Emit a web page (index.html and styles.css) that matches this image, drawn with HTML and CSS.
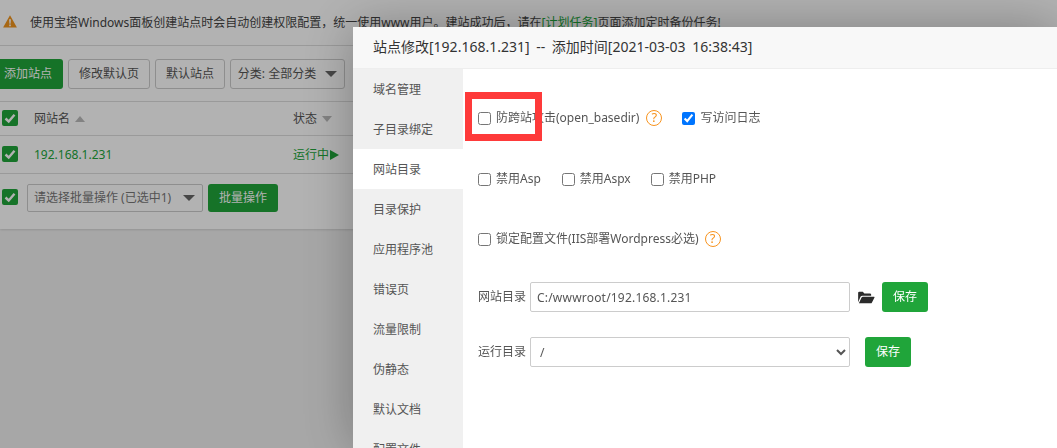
FILE: index.html
```html
<!DOCTYPE html>
<html lang="zh-CN">
<head>
<meta charset="utf-8">
<title>站点修改</title>
<link rel="stylesheet" href="styles.css">
</head>
<body>
<div class="page">
  <div class="alert">
    <svg class="warn" viewBox="0 0 14 13" width="14" height="13"><path d="M7 .3 13.9 12.6H.1Z" fill="#f0941e"/><path d="M6.1 4.2h1.8l-.3 4.6H6.4ZM6.2 9.6h1.6v1.6H6.2Z" fill="#fff"/></svg>
    <span>使用宝塔Windows面板创建站点时会自动创建权限配置，统一使用www用户。建站成功后，请在<a class="link">[计划任务]</a>页面添加定时备份任务!</span>
  </div>
  <div class="toolbar">
    <span class="btn btn-green btn-first">添加站点</span>
    <span class="btn btn-plain w82">修改默认页</span>
    <span class="btn btn-plain w70">默认站点</span>
    <span class="btn btn-plain w115">分类: 全部分类<i class="caret caret-big"></i></span>
  </div>
  <div class="thead">
    <span class="tick"><svg viewBox="0 0 16 16"><path d="M3.5 8.5 6.700 11.500 12.500 4.800" fill="none" stroke="#fff" stroke-width="2.400"/></svg></span>
    <span class="col-name">网站名<i class="sort-up"></i></span>
    <span class="col-status">状态<i class="sort-down"></i></span>
  </div>
  <div class="trow">
    <span class="tick"><svg viewBox="0 0 16 16"><path d="M3.5 8.500 6.700 11.500 12.500 4.800" fill="none" stroke="#fff" stroke-width="2.400"/></svg></span>
    <span class="col-name green-text">192.168.1.231</span>
    <span class="col-status green-text">运行中<i class="play"></i></span>
  </div>
  <div class="tfoot">
    <span class="tick"><svg viewBox="0 0 16 16"><path d="M3.500 8.500 6.700 11.500 12.500 4.800" fill="none" stroke="#fff" stroke-width="2.400"/></svg></span>
    <span class="batch">请选择批量操作 (已选中1)<i class="caret"></i></span>
    <span class="btn btn-green w70 h28">批量操作</span>
  </div>
</div>
<div class="shade"></div>
<div class="modal">
  <div class="modal-title">站点修改[192.168.1.231] -- 添加时间[2021-03-03 16:38:43]</div>
  <div class="modal-body">
    <ul class="side">
      <li>域名管理</li>
      <li>子目录绑定</li>
      <li class="active">网站目录</li>
      <li>目录保护</li>
      <li>应用程序池</li>
      <li>错误页</li>
      <li>流量限制</li>
      <li>伪静态</li>
      <li>默认文档</li>
      <li>配置文件</li>
    </ul>
    <div class="content">
      <div class="opt-row r1">
        <label class="opt"><input type="checkbox">防跨站攻击(open_basedir)</label>
        <span class="help">?</span>
        <label class="opt opt-log"><input type="checkbox" checked>写访问日志</label>
      </div>
      <div class="opt-row r2">
        <label class="opt"><input type="checkbox">禁用Asp</label>
        <label class="opt opt-aspx"><input type="checkbox">禁用Aspx</label>
        <label class="opt"><input type="checkbox">禁用PHP</label>
      </div>
      <div class="opt-row r3">
        <label class="opt"><input type="checkbox">锁定配置文件(IIS部署Wordpress必选)</label>
        <span class="help">?</span>
      </div>
      <div class="field r4">
        <span class="field-label">网站目录</span>
        <input class="text" type="text" value="C:/wwwroot/192.168.1.231">
        <svg class="folder" viewBox="0 0 18 14" width="17" height="13"><path d="M0 12V2q0-1.300 1.300-1.300H5L6.700 2.600h6q1.300 0 1.300 1.300V5H4.500Q3.300 5 2.700 6Z" fill="#2b2b2b"/><path d="M.8 13.300 3.700 7q.4-.9 1.400-.9h12q.9 0 .5 .9l-2.700 5.400q-.4 .9-1.400 .9Z" fill="#2b2b2b"/></svg>
        <span class="btn save">保存</span>
      </div>
      <div class="field r5">
        <span class="field-label">运行目录</span>
        <select class="pick"><option>/</option></select>
        <span class="btn save save-run">保存</span>
      </div>
    </div>
  </div>
</div>
<div class="mark"></div>
</body>
</html>
```
FILE: styles.css
```css
* { box-sizing: border-box; }
html, body { margin: 0; height: 100%; overflow: hidden; }
body {
  width: 1057px;
  height: 448px;
  background: #f0f0f0;
  color: #555;
  font: 12px/1.5 "Noto Sans", "Noto Sans CJK SC", sans-serif;
}
.page { height: 229px; background: #fff; box-shadow: 0 1px 2px rgba(0,0,0,.12); }
.alert {
  height: 46px;
  display: flex;
  align-items: center;
  gap: 13px;
  padding: 0 0 0 3px;
  background: #fff;
  color: #444;
  border-bottom: 1px solid #ddd;
}
.warn { flex: none; position: relative; top: -1px; }
.link { color: #20a53a; }
.toolbar {
  height: 56px;
  display: flex;
  align-items: center;
  gap: 5px;
  border-bottom: 1px solid #ddd;
}
.btn {
  display: inline-flex;
  align-items: center;
  justify-content: center;
  height: 30px;
  border-radius: 3px;
  white-space: nowrap;
}
.btn-green { background: #20a53a; color: #fff; }
.btn-plain { border: 1px solid #ccc; color: #555; background: #fff; }
.btn-first { width: 63px; justify-content: flex-end; padding-right: 11px; border-radius: 0 3px 3px 0; }
.w82 { width: 82px; }
.w70 { width: 70px; }
.w115 { width: 115px; }
.h28 { height: 28px; }
.caret {
  width: 0; height: 0;
  border-left: 6px solid transparent;
  border-right: 6px solid transparent;
  border-top: 6px solid #666;
  margin-left: 8px;
}
.caret-big { margin-left: 9px; }
.thead, .trow {
  display: flex;
  align-items: center;
  border-bottom: 1px solid #ddd;
  padding-left: 2px;
}
.thead { height: 34px; }
.trow { height: 38px; }
.tfoot { display: flex; align-items: center; height: 55px; padding: 0 0 7px 2px; }
.tick {
  flex: none;
  width: 16px; height: 16px;
  margin-top: -1px;
  border-radius: 2px;
  background: #20a53a;
}
.tfoot .tick { margin-top: -2px; }
.tick svg { display: block; width: 16px; height: 16px; }
.col-name { width: 259px; margin-left: 16px; display: flex; align-items: center; }
.col-status { display: flex; align-items: center; white-space: nowrap; }
.green-text { color: #20a53a; }
.sort-up, .sort-down {
  width: 0; height: 0;
  border-left: 5.500px solid transparent;
  border-right: 5.500px solid transparent;
  margin-left: 5px;
}
.sort-up { border-bottom: 6px solid #bbb; }
.sort-down { border-top: 6px solid #bbb; }
.play {
  width: 0; height: 0;
  border-top: 5px solid transparent;
  border-bottom: 5px solid transparent;
  border-left: 9px solid #20a53a;
  margin-left: 1px;
}
.batch {
  width: 176px; height: 28px;
  margin: 0 5px 0 9px;
  display: flex;
  align-items: center;
  justify-content: space-between;
  padding: 0 7px 0 6px;
  border: 1px solid #ccc;
  border-radius: 2px;
  color: #777;
  white-space: nowrap;
  background: #fff;
}
.batch .caret { margin-left: 0; flex: none; }
.shade { position: fixed; inset: 0; background: rgba(0,0,0,.3); }
.modal {
  position: fixed;
  left: 353px; top: 27px;
  width: 704px; height: 421px;
  background: #fff;
  box-shadow: 1px 1px 50px rgba(0,0,0,.3);
  overflow: hidden;
}
.modal-title {
  height: 42px;
  padding-left: 20px;
  font-size: 14px;
  line-height: 40px;
  word-spacing: 3px;
  color: #333;
  background: #f8f8f8;
  border-bottom: 1px solid #eee;
  white-space: nowrap;
}
.modal-body { display: flex; height: 379px; }
.side {
  flex: none;
  width: 110px;
  height: 379px;
  margin: 0;
  padding: 0;
  list-style: none;
  background: #f0f0f0;
  overflow: hidden;
}
.side li { height: 40px; line-height: 42px; padding-left: 20px; color: #555; }
.side .active { background: #fff; }
.content { flex: 1; padding-left: 15px; }
.opt-row { display: flex; align-items: center; height: 18px; }
.r1 { margin-top: 40px; }
.r2 { margin-top: 43px; }
.r3 { margin-top: 42px; }
.opt { display: flex; align-items: center; color: #555; white-space: nowrap; margin-right: 21px; }
.opt input { margin: 0 5px 0 0; flex: none; width: 13px; height: 13px; }
.r1 .opt { margin-right: 0; }
.opt-log { margin-left: 20px; }
.r2 .opt-aspx { margin-right: 20px; }
.r3 .opt { margin-right: 0; }
.help {
  flex: none;
  width: 16px; height: 16px;
  margin-left: 6px;
  border: 1.500px solid #f7931e;
  border-radius: 50%;
  color: #f7931e;
  font-size: 13px;
  line-height: 13px;
  text-align: center;
}
.r1 .help { margin-left: 7px; }
.field { display: flex; align-items: center; height: 30px; }
.r4 { margin-top: 34px; }
.r5 { margin-top: 25px; }
.field-label { width: 52px; flex: none; color: #555; }
.text, .pick {
  flex: none;
  width: 320px; height: 30px;
  border: 1px solid #ccc;
  border-radius: 2px;
  background: #fff;
  color: #555;
  font: inherit;
}
.text { padding: 0 6px; outline: none; letter-spacing: .2px; }
.pick { padding: 0 5px; }
.folder { flex: none; margin: 0 7px 0 8px; }
.save { width: 46px; background: #20a53a; color: #fff; flex: none; }
.save-run { margin-left: 15px; }
.mark {
  position: fixed;
  left: 465px; top: 92px;
  width: 77px; height: 49px;
  border: 7px solid #fe3a3a;
}
```
